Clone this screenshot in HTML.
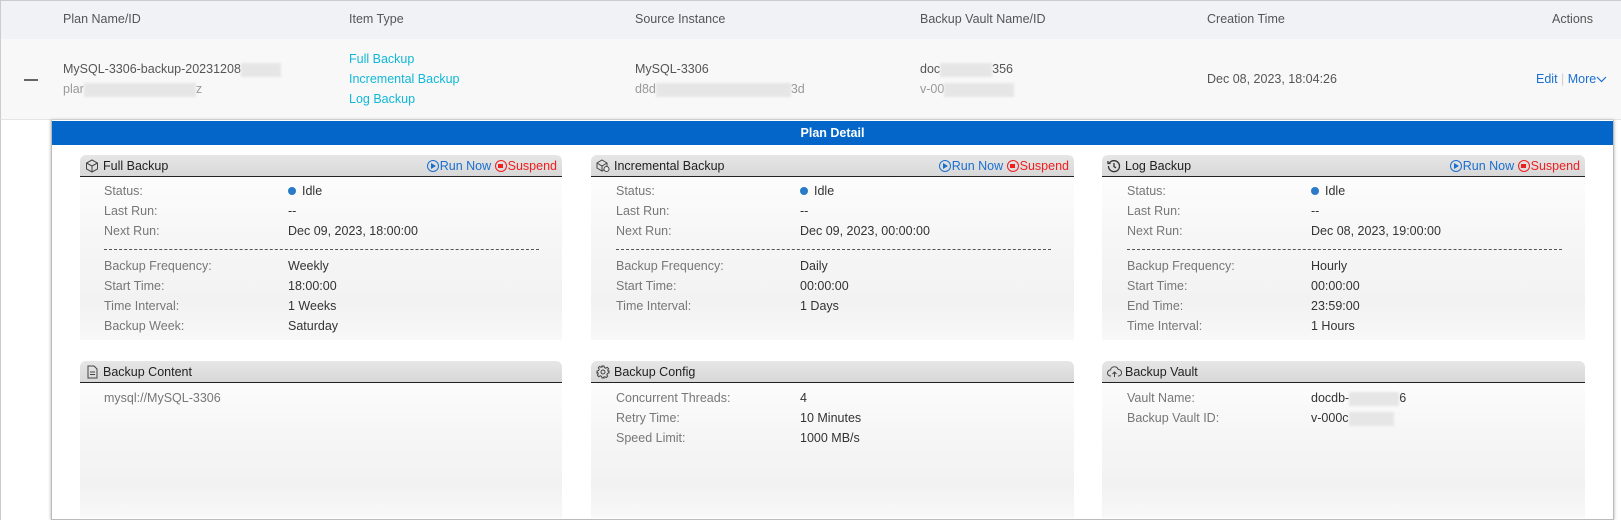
<!DOCTYPE html>
<html><head><style>
*{margin:0;padding:0;box-sizing:border-box}
body{width:1621px;height:520px;overflow:hidden;background:#fff;font-family:"Liberation Sans",Arial,sans-serif;font-size:12.5px;color:#333;position:relative}
.a{position:absolute;white-space:nowrap}
.g{color:#777}
.blur{display:inline-block;background:#e6e6e6;height:14px;vertical-align:middle;filter:blur(1px)}
.card{position:absolute;border-radius:6px 6px 0 0;background:linear-gradient(#fff 0%,#f6f6f6 45%,#f2f2f2 80%,#f8f8f8 100%)}
.ch{position:absolute;left:0;right:0;top:0;height:22px;background:linear-gradient(#e6e6e6,#d8d8d8);border-bottom:1px solid #222;border-radius:6px 6px 0 0;font-size:12.5px;color:#222;line-height:22px;padding-left:23px}
.ch svg{position:absolute;left:5px;top:4px}
.acts{position:absolute;right:5px;top:0;font-size:12.5px}
.run{color:#1a6fd0}.sus{color:#f01e1e}
.ic{display:inline-block;width:12px;height:12px;border:1.3px solid;border-radius:50%;vertical-align:-2px;position:relative;margin-right:1px}
.run .ic::after{content:"";position:absolute;left:3px;top:1.5px;border-left:5px solid #1a6fd0;border-top:3px solid transparent;border-bottom:3px solid transparent}
.sus .ic::after{content:"";position:absolute;left:2.5px;top:2.5px;width:4.5px;height:4.5px;background:#f01e1e}
.dot{display:inline-block;width:8px;height:8px;border-radius:50%;background:#2a7ac8;margin-right:6px;vertical-align:0}
.dash{position:absolute;height:0;border-top:1px dashed #555}
</style></head><body>
<div class="a" style="left:0;top:0;width:1621px;height:39px;background:#f0f2f5;border-top:1px solid #ccc;border-left:1px solid #ccc"></div>
<div class="a" style="left:0;top:39px;width:1621px;height:81px;background:#f8f8f8;border-left:1px solid #ccc;border-bottom:1px solid #e5e5e5"></div>
<div class="a" style="left:0;top:120px;width:1px;height:400px;background:#ccc"></div>
<div class="a g" style="left:63px;top:12px;color:#555">Plan Name/ID</div>
<div class="a g" style="left:349px;top:12px;color:#555">Item Type</div>
<div class="a g" style="left:635px;top:12px;color:#555">Source Instance</div>
<div class="a g" style="left:920px;top:12px;color:#555">Backup Vault Name/ID</div>
<div class="a g" style="left:1207px;top:12px;color:#555">Creation Time</div>
<div class="a g" style="left:1552px;top:12px;color:#555">Actions</div>
<div class="a" style="left:24px;top:79px;width:14px;height:2px;background:#666"></div>
<div class="a" style="left:63px;top:62px;color:#555">MySQL-3306-backup-20231208<span class="blur" style="width:40px"></span></div>
<div class="a g" style="left:63px;top:82px;color:#999">plar<span class="blur" style="width:112px"></span>z</div>
<div class="a" style="left:349px;top:52px;color:#10b8d8">Full Backup</div>
<div class="a" style="left:349px;top:72px;color:#10b8d8">Incremental Backup</div>
<div class="a" style="left:349px;top:92px;color:#10b8d8">Log Backup</div>
<div class="a" style="left:635px;top:62px;color:#555">MySQL-3306</div>
<div class="a" style="left:635px;top:82px;color:#999">d8d<span class="blur" style="width:135px"></span>3d</div>
<div class="a" style="left:920px;top:62px;color:#555">doc<span class="blur" style="width:52px"></span>356</div>
<div class="a" style="left:920px;top:82px;color:#999">v-00<span class="blur" style="width:70px"></span></div>
<div class="a" style="left:1207px;top:72px;color:#555">Dec 08, 2023, 18:04:26</div>
<div class="a" style="left:1536px;top:72px;color:#1a6fd0">Edit <span style="color:#ccc">|</span> More<svg width="11" height="8" viewBox="0 0 11 8"><path d="M1 2l4.5 4.5L10 2" fill="none" stroke="#1a6fd0" stroke-width="1.2"/></svg></div>

<div class="a" style="left:51px;top:120px;width:1563px;height:400px;border-left:1px solid #bbb;border-right:1px solid #bbb;box-shadow:0 0 3px #aaa;border-bottom:1px solid #bbb"></div>
<div class="a" style="left:52px;top:121px;width:1561px;height:24px;background:#0366c8;color:#fff;font-weight:bold;text-align:center;line-height:24px">Plan Detail</div>

<div class="card" style="left:80px;top:155px;width:482px;height:185px"><div class="ch"><svg width="14" height="14" viewBox="0 0 14 14" fill="none" stroke="#444" stroke-width="1"><path d="M7 1l5.5 3v6L7 13 1.5 10V4z M1.5 4L7 7l5.5-3 M7 7v6"/></svg>Full Backup<span class="acts"><span class="run"><span class="ic"></span>Run Now</span> <span class="sus"><span class="ic"></span>Suspend</span></span></div></div>
<div class="card" style="left:591px;top:155px;width:483px;height:185px"><div class="ch"><svg width="14" height="14" viewBox="0 0 14 14" fill="none" stroke="#444" stroke-width="1"><path d="M6 1l5 3v5L6 12 1 9V4z M1 4l5 3 5-3 M6 7v5"/><circle cx="10.5" cy="10" r="2.5" fill="#eee"/></svg>Incremental Backup<span class="acts"><span class="run"><span class="ic"></span>Run Now</span> <span class="sus"><span class="ic"></span>Suspend</span></span></div></div>
<div class="card" style="left:1102px;top:155px;width:483px;height:185px"><div class="ch"><svg width="14" height="14" viewBox="0 0 14 14" fill="none" stroke="#333" stroke-width="1.3"><path d="M2.5 4A5.5 5.5 0 1 1 1.5 7 M1 2v2.5h2.5 M7 4v3.5l2 1.5"/></svg>Log Backup<span class="acts"><span class="run"><span class="ic"></span>Run Now</span> <span class="sus"><span class="ic"></span>Suspend</span></span></div></div>

<div class="a g" style="left:104px;top:184px">Status:</div><div class="a" style="left:288px;top:184px"><span class="dot"></span>Idle</div>
<div class="a g" style="left:104px;top:204px">Last Run:</div><div class="a" style="left:288px;top:204px">--</div>
<div class="a g" style="left:104px;top:224px">Next Run:</div><div class="a" style="left:288px;top:224px">Dec 09, 2023, 18:00:00</div>
<div class="dash" style="left:104px;top:249px;width:435px"></div>
<div class="a g" style="left:104px;top:259px">Backup Frequency:</div><div class="a" style="left:288px;top:259px">Weekly</div>
<div class="a g" style="left:104px;top:279px">Start Time:</div><div class="a" style="left:288px;top:279px">18:00:00</div>
<div class="a g" style="left:104px;top:299px">Time Interval:</div><div class="a" style="left:288px;top:299px">1 Weeks</div>
<div class="a g" style="left:104px;top:319px">Backup Week:</div><div class="a" style="left:288px;top:319px">Saturday</div>
<div class="a g" style="left:616px;top:184px">Status:</div><div class="a" style="left:800px;top:184px"><span class="dot"></span>Idle</div>
<div class="a g" style="left:616px;top:204px">Last Run:</div><div class="a" style="left:800px;top:204px">--</div>
<div class="a g" style="left:616px;top:224px">Next Run:</div><div class="a" style="left:800px;top:224px">Dec 09, 2023, 00:00:00</div>
<div class="dash" style="left:616px;top:249px;width:435px"></div>
<div class="a g" style="left:616px;top:259px">Backup Frequency:</div><div class="a" style="left:800px;top:259px">Daily</div>
<div class="a g" style="left:616px;top:279px">Start Time:</div><div class="a" style="left:800px;top:279px">00:00:00</div>
<div class="a g" style="left:616px;top:299px">Time Interval:</div><div class="a" style="left:800px;top:299px">1 Days</div>
<div class="a g" style="left:1127px;top:184px">Status:</div><div class="a" style="left:1311px;top:184px"><span class="dot"></span>Idle</div>
<div class="a g" style="left:1127px;top:204px">Last Run:</div><div class="a" style="left:1311px;top:204px">--</div>
<div class="a g" style="left:1127px;top:224px">Next Run:</div><div class="a" style="left:1311px;top:224px">Dec 08, 2023, 19:00:00</div>
<div class="dash" style="left:1127px;top:249px;width:435px"></div>
<div class="a g" style="left:1127px;top:259px">Backup Frequency:</div><div class="a" style="left:1311px;top:259px">Hourly</div>
<div class="a g" style="left:1127px;top:279px">Start Time:</div><div class="a" style="left:1311px;top:279px">00:00:00</div>
<div class="a g" style="left:1127px;top:299px">End Time:</div><div class="a" style="left:1311px;top:299px">23:59:00</div>
<div class="a g" style="left:1127px;top:319px">Time Interval:</div><div class="a" style="left:1311px;top:319px">1 Hours</div>

<div class="card" style="left:80px;top:361px;width:482px;height:157px"><div class="ch"><svg width="14" height="14" viewBox="0 0 14 14" fill="none" stroke="#444" stroke-width="1"><path d="M3 1h6l3 3v9H3z M5 7h5 M5 9.5h5"/></svg>Backup Content</div></div>
<div class="card" style="left:591px;top:361px;width:483px;height:157px"><div class="ch"><svg width="14" height="14" viewBox="0 0 14 14" fill="none" stroke="#444" stroke-width="1"><circle cx="7" cy="7" r="2"/><path d="M6 1h2l.4 1.6 1.4.6 1.4-.9 1.4 1.4-.9 1.4.6 1.4L13 6v2l-1.6.4-.6 1.4.9 1.4-1.4 1.4-1.4-.9-1.4.6L8 13H6l-.4-1.6-1.4-.6-1.4.9-1.4-1.4.9-1.4-.6-1.4L1 8V6l1.6-.4.6-1.4-.9-1.4 1.4-1.4 1.4.9 1.4-.6z"/></svg>Backup Config</div></div>
<div class="card" style="left:1102px;top:361px;width:483px;height:157px"><div class="ch"><svg width="15" height="14" viewBox="0 0 15 14" fill="none" stroke="#444" stroke-width="1"><path d="M4 11H3.5a3 3 0 0 1 0-6 4 4 0 0 1 7.7-.5A3 3 0 0 1 11.5 11H11 M7.5 12V7 M5.5 9l2-2 2 2"/></svg>Backup Vault</div></div>
<div class="a g" style="left:104px;top:391px">mysql://MySQL-3306</div>
<div class="a g" style="left:616px;top:391px">Concurrent Threads:</div><div class="a" style="left:800px;top:391px">4</div>
<div class="a g" style="left:616px;top:411px">Retry Time:</div><div class="a" style="left:800px;top:411px">10 Minutes</div>
<div class="a g" style="left:616px;top:431px">Speed Limit:</div><div class="a" style="left:800px;top:431px">1000 MB/s</div>
<div class="a g" style="left:1127px;top:391px">Vault Name:</div><div class="a" style="left:1311px;top:391px">docdb-<span class="blur" style="width:50px"></span>6</div>
<div class="a g" style="left:1127px;top:411px">Backup Vault ID:</div><div class="a" style="left:1311px;top:411px">v-000c<span class="blur" style="width:45px"></span></div>
</body></html>
